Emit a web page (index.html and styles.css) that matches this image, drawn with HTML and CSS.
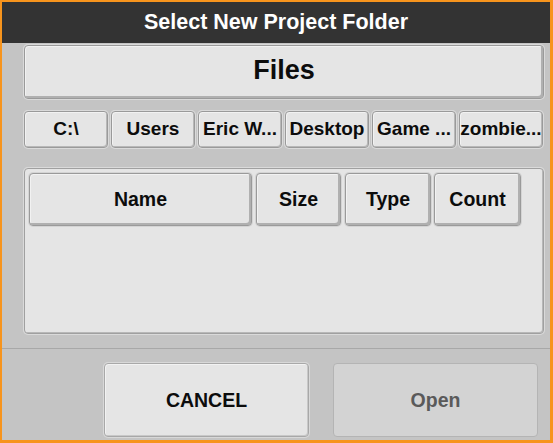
FILE: index.html
```html
<!DOCTYPE html>
<html>
<head>
<meta charset="utf-8">
<link rel="stylesheet" href="styles.css">
</head>
<body>
<div class="frame">
  <div class="title">Select New Project Folder</div>
  <div class="content">
    <div class="btn files">Files</div>
    <div class="crumbs">
      <div class="btn crumb">C:\</div>
      <div class="btn crumb">Users</div>
      <div class="btn crumb">Eric W...</div>
      <div class="btn crumb">Desktop</div>
      <div class="btn crumb">Game ...</div>
      <div class="btn crumb">zombie...</div>
    </div>
    <div class="list">
      <div class="head">
        <div class="btn col col-name">Name</div>
        <div class="btn col col-size">Size</div>
        <div class="btn col col-type">Type</div>
        <div class="btn col col-count">Count</div>
      </div>
    </div>
  </div>
  <div class="footer">
    <div class="btn action">CANCEL</div>
    <div class="btn action disabled">Open</div>
  </div>
</div>
</body>
</html>
```

FILE: styles.css
```css
html, body {
  margin: 0;
  padding: 0;
}
body {
  font-family: "Liberation Sans", Arial, sans-serif;
  font-weight: bold;
  color: #0c0c0c;
}
.frame {
  width: 553px;
  height: 443px;
  box-sizing: border-box;
  border-style: solid;
  border-color: #f7941d;
  border-width: 2px 3px 3px 2px;
  background: #c4c4c4;
  display: flex;
  flex-direction: column;
}
.title {
  height: 41px;
  background: #333333;
  color: #fff;
  font-size: 21.5px;
  display: flex;
  align-items: center;
  justify-content: center;
  flex: none;
}
.content {
  padding: 2px 6px 0 22px;
  display: flex;
  flex-direction: column;
  flex: none;
}
.btn {
  box-sizing: border-box;
  background: #e5e5e5;
  border: 1px solid #9a9a9a;
  border-radius: 4px;
  box-shadow: inset -1px -1px 0 #b8b8b8, inset 1px 1px 0 #f2f2f2, 0 0 0 1px #dadada;
  display: flex;
  align-items: center;
  justify-content: center;
  white-space: nowrap;
}
.files {
  height: 54px;
  font-size: 27px;
  padding-bottom: 3px;
  box-shadow: inset -2px -2px 0 #b0b0b0, inset 1px 1px 0 #f2f2f2, 0 0 0 1px #dadada;
}
.crumbs {
  margin-top: 12px;
  display: flex;
  gap: 3px;
}
.crumb {
  width: 84px;
  height: 37px;
  font-size: 19px;
  padding-bottom: 1px;
  overflow: hidden;
}
.list {
  margin-top: 20px;
  height: 166px;
  box-sizing: border-box;
  background: #e5e5e5;
  border: 1px solid #a0a0a0;
  border-radius: 4px;
  box-shadow: inset -1px -1px 0 #b8b8b8, 0 0 0 1px #dadada;
  padding: 4px 0 0 4px;
}
.head {
  display: flex;
  gap: 4px;
}
.col {
  height: 53px;
  font-size: 19.5px;
  box-shadow: inset -2px -2px 0 #b0b0b0, inset 1px 1px 0 #f2f2f2, 0 0 0 1px #d4d4d4;
}
.col-name { width: 223px; }
.col-size { width: 85px; }
.col-type { width: 86px; }
.col-count { width: 87px; margin-left: -1px; }
.footer {
  margin-top: 14px;
  border-top: 1px solid #a8a8a8;
  flex: 1;
  display: flex;
  justify-content: flex-end;
  gap: 24px;
  padding: 14px 12px 0 0;
}
.action {
  width: 205px;
  height: 74px;
  font-size: 19.5px;
  box-shadow: inset -1px -1px 0 #c8c8c8, inset 1px 1px 0 #f2f2f2, 0 0 0 1px #d8d8d8;
  border-color: #a8a8a8;
}
.disabled {
  background: #d3d3d3;
  color: #5a5a5a;
  border-color: #b4b4b4;
  box-shadow: none;
}
```
